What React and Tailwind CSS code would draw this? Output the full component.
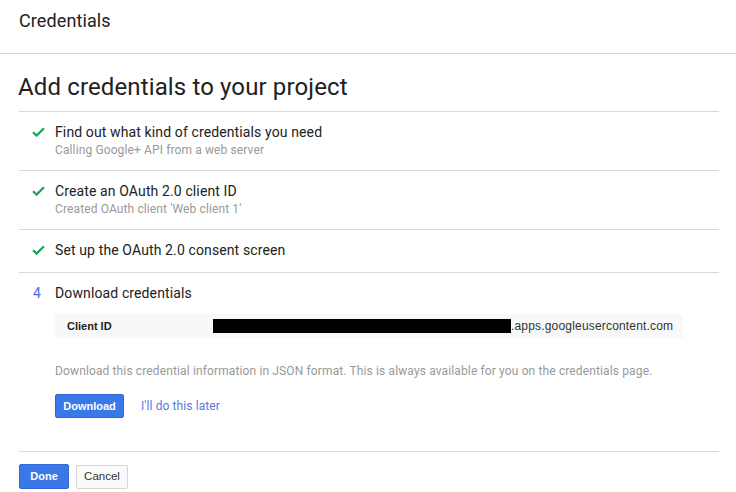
import React from "react";

function Check() {
  return (
    <svg width="13" height="10" viewBox="0 0 13 10" className="block">
      <path d="M1 5.2 L4.6 8.6 L12 1.2" fill="none" stroke="#1aa355" strokeWidth="2.2" />
    </svg>
  );
}

function Step({ icon, title, sub, children, last }) {
  return (
    <div className={"flex pt-[10px] " + (last ? "" : "pb-[12px] border-b border-[#d9d9d9]")}>
      <div className="w-[36px] shrink-0 pl-[13px] pt-[5px]">{icon}</div>
      <div className="flex-1">
        <div className="text-[14px] leading-[20px] text-[#212121] tracking-[0.12px]">{title}</div>
        {sub && <div className="text-[12px] leading-[16px] text-[#999999] tracking-[0.12px]">{sub}</div>}
        {children}
      </div>
    </div>
  );
}

export default function App() {
  return (
    <div className="w-[736px] h-[492px] bg-white overflow-hidden" style={{ fontFamily: "Roboto, 'Liberation Sans', sans-serif" }}>
      <div className="h-[54px] border-b border-[#d0d0d0] px-[19px] pt-[9px]">
        <div className="text-[18px] leading-[24px] text-[#212121] tracking-[0.1px]">Credentials</div>
      </div>
      <div className="pl-[19px] pr-[17px]">
        <div className="pt-[17px] pb-[8px] border-b border-[#d9d9d9]">
          <div className="text-[24px] leading-[32px] text-[#212121] -ml-[1px] tracking-[0.13px]">Add credentials to your project</div>
        </div>
        <Step icon={<Check />} title="Find out what kind of credentials you need" sub="Calling Google+ API from a web server" />
        <Step icon={<Check />} title="Create an OAuth 2.0 client ID" sub="Created OAuth client 'Web client 1'" />
        <Step icon={<Check />} title="Set up the OAuth 2.0 consent screen" />
        <div className="flex pt-[10px] pb-[33px] border-b border-[#d9d9d9]">
          <div className="w-[36px] shrink-0 pl-[14px] text-[14px] leading-[20px] text-[#4c6fe0]">4</div>
          <div className="flex-1">
            <div className="text-[14px] leading-[20px] text-[#212121] tracking-[0.12px]">Download credentials</div>
            <div className="mt-[11px] w-[628px] h-[24px] bg-[#f8f8f8] flex items-center pl-[12px]" style={{ fontFamily: "'Liberation Sans', Arial, sans-serif" }}>
              <div className="w-[146px] text-[11px] font-bold text-[#212121]">Client ID</div>
              <div className="w-[298px] h-[14px] bg-black" />
              <div className="text-[12px] text-[#333333] tracking-[0.18px]">.apps.googleusercontent.com</div>
            </div>
            <div className="mt-[25px] text-[12px] leading-[16px] text-[#999999] tracking-[0.13px]">
              Download this credential information in JSON format. This is always available for you on the credentials page.
            </div>
            <div className="mt-[15px] flex items-center">
              <button className="h-[24px] w-[69px] rounded-[2px] bg-[#3b78e7] border border-[#3367d6] text-white text-[11px] font-bold" style={{ fontFamily: "'Liberation Sans', Arial, sans-serif" }}>
                Download
              </button>
              <span className="ml-[17px] text-[12px] text-[#5a78e0] tracking-[0.1px]">I'll do this later</span>
            </div>
          </div>
        </div>
        <div className="pt-[12px] flex items-start gap-[7px]" style={{ fontFamily: "'Liberation Sans', Arial, sans-serif" }}>
          <button className="h-[25px] w-[50px] rounded-[2px] bg-[#3b78e7] border border-[#3367d6] text-white text-[11px] font-bold">Done</button>
          <button className="mt-[1px] h-[24px] w-[52px] rounded-[2px] bg-[#fafafa] border border-[#d6d6d6] text-[#333333] text-[11.5px]">Cancel</button>
        </div>
      </div>
    </div>
  );
}
